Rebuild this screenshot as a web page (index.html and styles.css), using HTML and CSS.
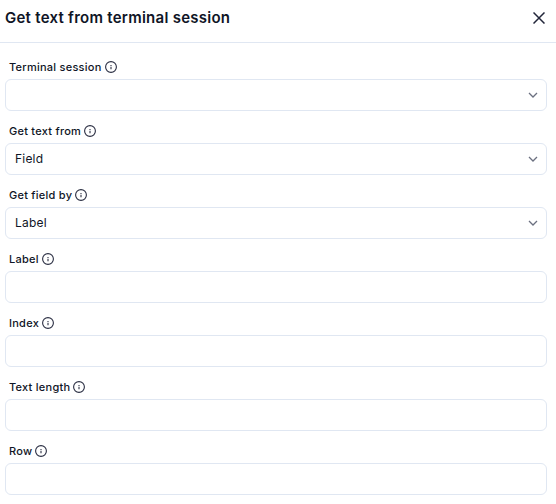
FILE: index.html
```html
<!DOCTYPE html>
<html lang="en">
<head>
<meta charset="utf-8">
<title>Get text from terminal session</title>
<link rel="stylesheet" href="styles.css">
</head>
<body>
<svg class="defs" width="0" height="0"><defs>
<symbol id="info" viewBox="0 0 12 12"><circle cx="6" cy="6" r="5.4"/><path d="M6 5.7v2.6M6 4v1" stroke-width="1.1"/></symbol>
<symbol id="chevron" viewBox="0 0 10 6"><path d="M1 1l4 4 4-4"/></symbol>
</defs></svg>
<header class="header">
<h1 class="title">Get text from terminal session</h1>
<svg class="close" viewBox="0 0 12 12"><path d="M.5.5l11 11M11.5.5l-11 11"/></svg>
</header>
<main class="form">
<div class="field"><div class="label">Terminal session<svg class="info"><use href="#info"/></svg></div><div class="control"><span></span><svg class="chevron"><use href="#chevron"/></svg></div></div>
<div class="field"><div class="label">Get text from<svg class="info"><use href="#info"/></svg></div><div class="control"><span>Field</span><svg class="chevron"><use href="#chevron"/></svg></div></div>
<div class="field"><div class="label">Get field by<svg class="info"><use href="#info"/></svg></div><div class="control"><span>Label</span><svg class="chevron"><use href="#chevron"/></svg></div></div>
<div class="field"><div class="label">Label<svg class="info"><use href="#info"/></svg></div><div class="control"></div></div>
<div class="field"><div class="label">Index<svg class="info"><use href="#info"/></svg></div><div class="control"></div></div>
<div class="field"><div class="label">Text length<svg class="info"><use href="#info"/></svg></div><div class="control"></div></div>
<div class="field"><div class="label">Row<svg class="info"><use href="#info"/></svg></div><div class="control"></div></div>
</main>
</body>
</html>
```
FILE: styles.css
```css
* { box-sizing: border-box; }
body { margin: 0; background: #fff; color: #0f1526; font-family: Inter, sans-serif; overflow: hidden; }
svg { fill: none; stroke: currentColor; flex: none; }
.defs { display: none; }
.header { height: 43px; padding: 0 11px 7px 5px; border-bottom: 1px solid #e0e7f2; display: flex; align-items: center; justify-content: space-between; }
.title { margin: 0; font-size: 15px; line-height: 20px; font-weight: 600; letter-spacing: .26px; }
.close { width: 12px; height: 12px; color: #22263a; stroke-width: 1.5; }
.form { padding: 16px 9px 0 5px; }
.field { height: 64px; }
.label { height: 16px; margin-bottom: 4px; padding-left: 4px; display: flex; align-items: center; gap: 3px; font-size: 11px; font-weight: 500; letter-spacing: .25px; }
.info { width: 12px; height: 12px; color: #2a2e42; stroke-width: 1.1; }
.control { height: 32px; padding: 0 8px 0 9px; border: 1px solid #e0e7f2; border-radius: 6px; display: flex; align-items: center; justify-content: space-between; font-size: 12px; line-height: 16px; letter-spacing: .2px; }
.control span { padding-bottom: 1px; }
.chevron { width: 10px; height: 6px; color: #6b7080; stroke-width: 1.3; }
```
